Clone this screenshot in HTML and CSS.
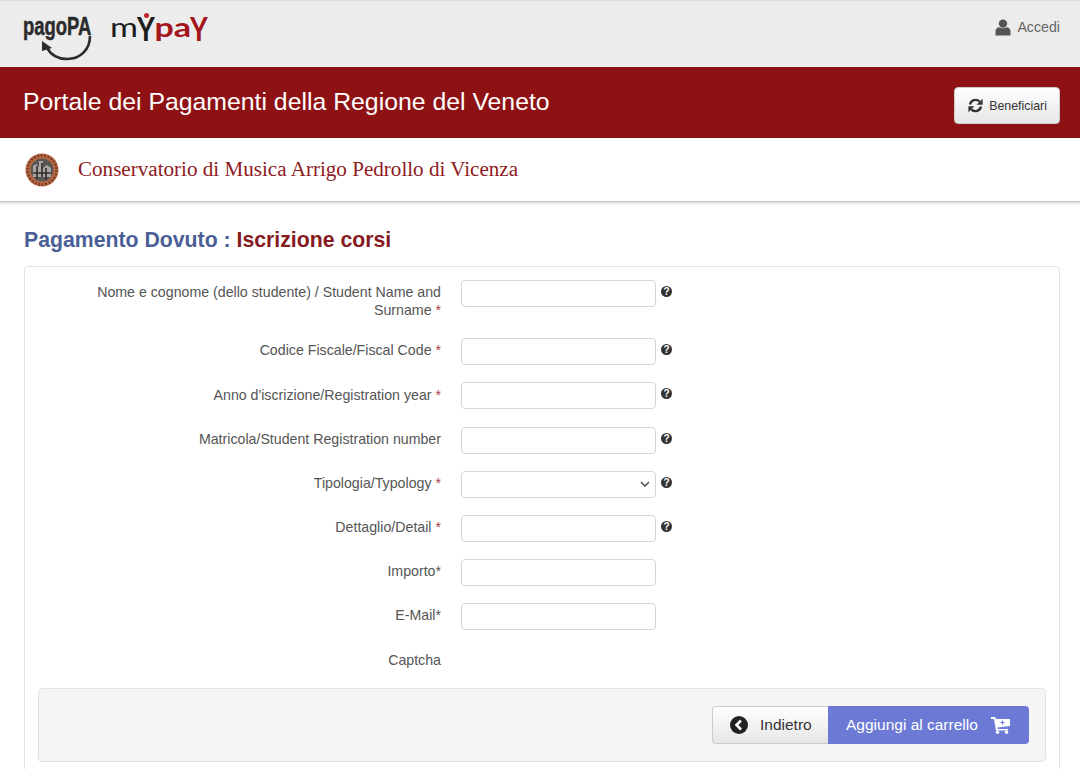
FILE: index.html
```html
<!DOCTYPE html>
<html lang="it">
<head>
    <meta charset="UTF-8">
    <meta name="viewport" content="width=device-width, initial-scale=1.0">
    <title>Portale dei Pagamenti della Regione del Veneto</title>
    <link rel="stylesheet" href="styles.css">
</head>
<body>
    <!-- barra loghi -->
    <div class="top-bar">
        <div class="logos">
            <div class="logo-pagopa">
                <span class="pagopa-text">pagoPA</span>
                <svg class="pagopa-arrow" width="52" height="30" viewBox="0 0 52 30">
                    <path d="M49 3 C49 16 40 26 26 26 C17 26 10 22 6 15" fill="none" stroke="#2b2b2b" stroke-width="2.6"/>
                    <path d="M1 8 L1 18 L11 15 Z" fill="#2b2b2b"/>
                </svg>
            </div>
            <div class="logo-mypay"><span class="my">m<b>Y</b></span><span class="pay">pa<b>Y</b></span><i class="my-dot"></i></div>
        </div>
        <a class="login-link" href="#">
            <svg width="16" height="17" viewBox="0 0 16 17">
                <circle cx="8" cy="4.6" r="4.2" fill="#555"/>
                <path d="M0.5 16.5 V12.2 C0.5 9.8 2.2 8.4 4.2 8.2 C6.5 9.7 9.5 9.7 11.8 8.2 C13.8 8.4 15.5 9.8 15.5 12.2 V16.5 Z" fill="#555"/>
            </svg>
            Accedi
        </a>
    </div>

    <div class="title-band">
        <h1>Portale dei Pagamenti della Regione del Veneto</h1>
        <a class="btn btn-small" href="#">
            <svg width="15" height="15" viewBox="0 0 15 15">
                <path d="M2 6.5 A5.6 5.6 0 0 1 11.6 3.6" fill="none" stroke="#333" stroke-width="2.3"/>
                <path d="M14.6 0.8 V6.8 H8.6 Z" fill="#333"/>
                <path d="M13 8.5 A5.6 5.6 0 0 1 3.4 11.4" fill="none" stroke="#333" stroke-width="2.3"/>
                <path d="M0.4 14.2 V8.2 H6.4 Z" fill="#333"/>
            </svg>
            Beneficiari
        </a>
    </div>

    <div class="ente-bar">
        <svg class="ente-logo" width="34" height="34" viewBox="0 0 34 34">
            <circle cx="17" cy="17" r="16.5" fill="#c0683f"/>
            <circle cx="17" cy="17" r="14.5" fill="none" stroke="#6d4030" stroke-width="2.4" stroke-dasharray="2 1.5"/>
            <circle cx="17" cy="17" r="11.5" fill="#5a5653"/>
            <path d="M8 24 L8 13 L11 11 L14 14 L14 8 L18 8 L18 15 L22 12 L26 15 L26 24 Z" fill="#a8a5a2"/>
            <path d="M12 13 V26 M17 10 V24 M21 15 V27 M8 20 H26" stroke="#2e2c2b" stroke-width="1.6"/>
        </svg>
        <span class="ente-name">Conservatorio di Musica Arrigo Pedrollo di Vicenza</span>
    </div>

    <div class="content">
        <h2 class="page-title"><span class="title-blue">Pagamento Dovuto :</span> <span class="title-red">Iscrizione corsi</span></h2>

        <div class="form-panel">
            <form class="dovuto-form">
                <div class="form-row">
                    <label for="nome"><span class="label-line">Nome e cognome (dello studente) / Student Name and</span> <span class="label-line">Surname <em>*</em></span></label>
                    <input type="text" id="nome">
                    <span class="help">?</span>
                </div>
                <div class="form-row">
                    <label for="cf">Codice Fiscale/Fiscal Code <em>*</em></label>
                    <input type="text" id="cf">
                    <span class="help">?</span>
                </div>
                <div class="form-row">
                    <label for="anno">Anno d'iscrizione/Registration year <em>*</em></label>
                    <input type="text" id="anno">
                    <span class="help">?</span>
                </div>
                <div class="form-row">
                    <label for="matricola">Matricola/Student Registration number</label>
                    <input type="text" id="matricola">
                    <span class="help">?</span>
                </div>
                <div class="form-row">
                    <label for="tipologia">Tipologia/Typology <em>*</em></label>
                    <select id="tipologia"><option></option></select>
                    <span class="help">?</span>
                </div>
                <div class="form-row">
                    <label for="dettaglio">Dettaglio/Detail <em>*</em></label>
                    <input type="text" id="dettaglio">
                    <span class="help">?</span>
                </div>
                <div class="form-row">
                    <label for="importo">Importo*</label>
                    <input type="text" id="importo">
                </div>
                <div class="form-row">
                    <label for="email">E-Mail*</label>
                    <input type="text" id="email">
                </div>
                <div class="form-row">
                    <label>Captcha</label>
                </div>
            </form>

            <div class="form-actions">
                <div class="btn-group">
                    <a class="btn btn-back" href="#">
                        <svg width="18" height="18" viewBox="0 0 18 18">
                            <circle cx="9" cy="9" r="9" fill="#222"/>
                            <path d="M11 4.5 L6.5 9 L11 13.5" fill="none" stroke="#fff" stroke-width="2.6"/>
                        </svg>
                        Indietro
                    </a>
                    <a class="btn btn-cart" href="#">
                        Aggiungi al carrello
                        <svg width="20" height="18" viewBox="0 0 20 18">
                            <path d="M0 1 H4 L5 3 H19 V10 L6.5 11.5 L6.8 13 H17 V14.5 H5 L3 3 H0 Z" fill="#fff"/>
                            <circle cx="6.5" cy="16.2" r="1.7" fill="#fff"/>
                            <circle cx="15.5" cy="16.2" r="1.7" fill="#fff"/>
                            <path d="M11.5 4.5 V8.5 M9.5 6.5 H13.5" stroke="#6c7ad5" stroke-width="1.2"/>
                        </svg>
                    </a>
                </div>
            </div>
        </div>
    </div>
</body>
</html>
```

FILE: styles.css
```css
html, body {
    margin: 0;
    padding: 0;
    height: 769px;
    overflow: hidden;
    background-color: #fff;
    font-family: "Liberation Sans", Arial, sans-serif;
    font-size: 14.2px;
    color: #555;
}

a {
    text-decoration: none;
}

/* barra loghi */
.top-bar {
    display: flex;
    justify-content: space-between;
    height: 66px;
    background-color: #ececec;
    border-top: 1px solid #dcdce0;
    padding: 0 20px 0 23px;
}

.logos {
    display: flex;
    align-items: flex-start;
    gap: 19px;
}

.logo-pagopa {
    position: relative;
    width: 68px;
    height: 66px;
}

.pagopa-text {
    position: absolute;
    top: 7px;
    left: 0;
    font-size: 26px;
    line-height: 36px;
    font-weight: bold;
    color: #2b2b2b;
    white-space: nowrap;
    -webkit-text-stroke: 0.5px #2b2b2b;
    transform: scaleX(0.71);
    transform-origin: left top;
}

.pagopa-arrow {
    position: absolute;
    top: 32px;
    left: 18px;
}

.logo-mypay {
    position: relative;
    width: 97px;
    font-family: "Lato", sans-serif;
    font-size: 27px;
    line-height: 30px;
    margin-top: 11px;
    white-space: nowrap;
    transform: scaleX(1.26);
    transform-origin: left top;
}

/* la Y del logo scende sotto la riga */
.logo-mypay b {
    display: inline-flex;
    justify-content: center;
    width: 13px;
    font-size: 32px;
    line-height: 1;
    vertical-align: -4px;
    font-weight: bold;
    transform: scaleX(0.68);
}

.logo-mypay .my {
    color: #1c1c1c;
}

.logo-mypay .pay {
    color: #a3161d;
    font-weight: bold;
}

.my-dot {
    position: absolute;
    top: 1px;
    left: 27px;
    width: 4px;
    height: 5px;
    border-radius: 50%;
    background-color: #c0272d;
}

.login-link {
    display: flex;
    align-items: center;
    gap: 6px;
    height: 52px;
    color: #666;
}

/* fascia titolo */
.title-band {
    display: flex;
    justify-content: space-between;
    align-items: center;
    height: 71px;
    background-color: #8e1213;
    padding: 0 20px 0 23px;
}

.title-band h1 {
    margin: 0 0 1px;
    font-size: 24.8px;
    font-weight: normal;
    color: #fff;
}

.btn {
    display: inline-flex;
    align-items: center;
    box-sizing: border-box;
}

.btn-small {
    gap: 6px;
    height: 37px;
    margin-top: 6px;
    padding: 0 12px 0 13px;
    font-size: 12.4px;
    color: #333;
    background: linear-gradient(to bottom, #fff, #e6e6e6);
    border: 1px solid #ccc;
    border-radius: 4px;
}

/* ente */
.ente-bar {
    display: flex;
    align-items: center;
    gap: 19px;
    height: 64px;
    padding-left: 25px;
    box-sizing: border-box;
    border-bottom: 1px solid #c8c8c8;
    box-shadow: 0 1px 3px rgba(0, 0, 0, 0.2);
}

.ente-name {
    font-family: "Liberation Serif", "Times New Roman", serif;
    font-size: 21.1px;
    color: #8e1a1e;
}

.content {
    padding: 0 20px 0 24px;
}

.page-title {
    margin: 26px 0 14px;
    font-size: 21.25px;
    line-height: 24px;
    font-weight: bold;
}

.title-blue {
    color: #4a5f96;
}

.title-red {
    color: #861a1e;
}

.form-panel {
    height: 520px;
    box-sizing: border-box;
    border: 1px solid #e3e3e3;
    border-radius: 4px;
    padding: 13px 13px 0;
}

.form-row {
    display: flex;
    align-items: flex-start;
    min-height: 27px;
    margin-bottom: 17.2px;
}

.form-row label {
    box-sizing: border-box;
    width: 403px;
    flex-shrink: 0;
    padding: 3.2px 0 1.8px 50px;
    text-align: right;
    line-height: 18px;
    color: #555;
}

.label-line {
    display: block;
}

.form-row label em {
    font-style: normal;
    color: #a94442;
}

.form-row input, .form-row select {
    box-sizing: border-box;
    width: 195px;
    height: 27px;
    margin-left: 20px;
    padding: 0 6px;
    background-color: #fff;
    border: 1px solid #d6d6d6;
    border-radius: 4px;
}

.form-row select {
    appearance: none;
    background: #fff url("data:image/svg+xml,%3Csvg xmlns='http://www.w3.org/2000/svg' width='10' height='6'%3E%3Cpath d='M1 1 L5 5 L9 1' fill='none' stroke='%23555' stroke-width='1.6'/%3E%3C/svg%3E") no-repeat right 5px center;
}

.help {
    width: 11px;
    height: 11px;
    margin: 6px 0 0 5px;
    border-radius: 50%;
    background-color: #333;
    color: #fff;
    font-size: 10px;
    font-weight: bold;
    line-height: 11px;
    text-align: center;
}

.form-actions {
    display: flex;
    justify-content: flex-end;
    height: 74px;
    box-sizing: border-box;
    margin-top: -4px;
    padding: 17px 16px 0 0;
    background-color: #f5f5f5;
    border: 1px solid #e3e3e3;
    border-radius: 4px;
}

.btn-group {
    display: flex;
    height: 38px;
}

.btn-back {
    gap: 12px;
    width: 116px;
    padding-left: 17px;
    color: #333;
    font-size: 15.5px;
    background: linear-gradient(to bottom, #fff, #e6e6e6);
    border: 1px solid #ccc;
    border-right: none;
    border-radius: 4px 0 0 4px;
}

.btn-cart {
    gap: 13px;
    width: 201px;
    padding-left: 18px;
    color: #fff;
    font-size: 15.5px;
    background-color: #6c7ad5;
    border-radius: 0 4px 4px 0;
}
```
